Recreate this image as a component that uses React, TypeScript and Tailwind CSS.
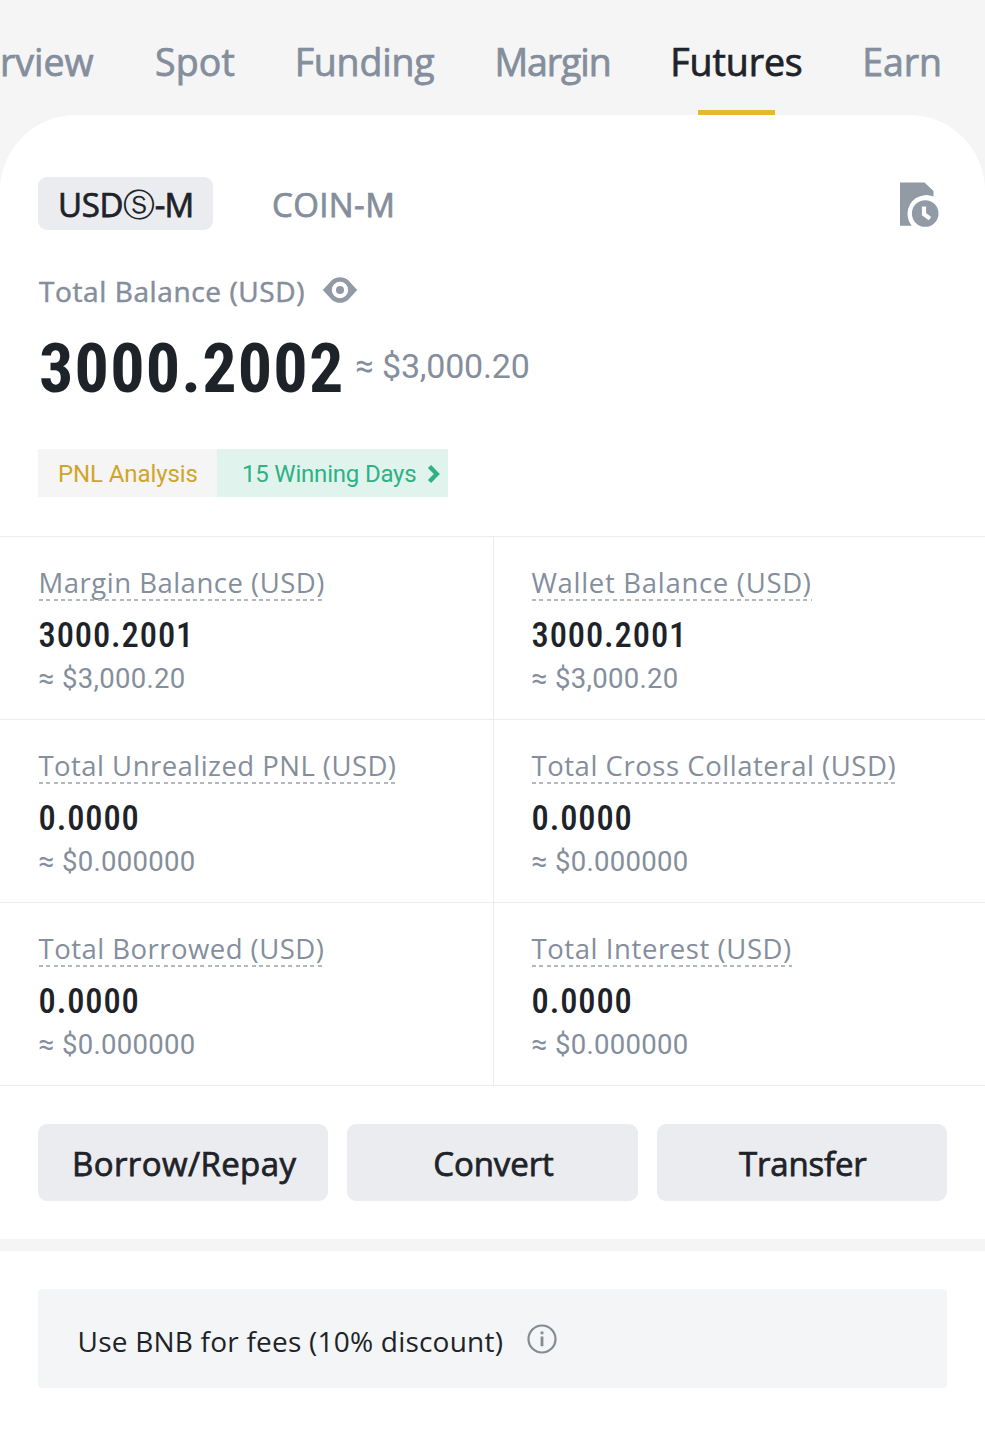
import React from "react";

const medium = "[-webkit-text-stroke:0.75px_currentColor]";
const din = "font-['Roboto','Liberation_Sans',sans-serif]";

const tabs = [
  { label: "Spot", width: "w-[80px]", tracking: "tracking-[0.2px]" },
  { label: "Funding", width: "w-[139px]", tracking: "tracking-[-0.2px]" },
  { label: "Margin", width: "w-[117px]", tracking: "tracking-[-1.1px]" },
  { label: "Futures", width: "w-[131px]", tracking: "tracking-[-0.1px]", active: true },
  { label: "Earn", width: "w-[80px]", tracking: "tracking-[-0.1px]" },
];

const stats = [
  { label: "Margin Balance (USD)", tracking: "tracking-[0.5px]", value: "3000.2001", approx: "$3,000.20" },
  { label: "Wallet Balance (USD)", tracking: "tracking-[0.7px]", value: "3000.2001", approx: "$3,000.20" },
  { label: "Total Unrealized PNL (USD)", tracking: "tracking-[0.46px]", value: "0.0000", approx: "$0.000000" },
  { label: "Total Cross Collateral (USD)", tracking: "tracking-[0.54px]", value: "0.0000", approx: "$0.000000" },
  { label: "Total Borrowed (USD)", tracking: "tracking-[0.48px]", value: "0.0000", approx: "$0.000000" },
  { label: "Total Interest (USD)", tracking: "tracking-[0.58px]", value: "0.0000", approx: "$0.000000" },
];

const HistoryIcon: React.FC = () => (
  <svg width="40" height="46" viewBox="0 0 40 46" className="text-[#929aa5]">
    <path
      fill="currentColor"
      d="M1 .5h24.5L34.5 9v5.6A18.6 18.6 0 0 0 8.5 31.5c0 5 1.6 9 4.3 12.3H1z"
    />
    <circle cx="26.2" cy="31.5" r="13.3" fill="currentColor" />
    <path d="M25 24.5v7.6l6 4.6" fill="none" stroke="#fff" strokeWidth="4.2" />
  </svg>
);

const EyeIcon: React.FC = () => (
  <svg width="36" height="28" viewBox="0 0 36 28" className="text-[#929aa5]">
    <path
      fill="currentColor"
      fillRule="evenodd"
      d="M.8 14 9.5 4.4C14.5.1 21.5.1 26.5 4.4L35.2 14l-8.7 9.4c-5 4.5-12 4.5-17 0zM18 5.8a8.2 8.2 0 1 0 0 16.4 8.2 8.2 0 0 0 0-16.4z"
    />
    <circle cx="18" cy="14" r="4" fill="currentColor" />
  </svg>
);

const InfoIcon: React.FC = () => (
  <svg width="30" height="30" viewBox="0 0 30 30" className="text-[#858a91]">
    <circle cx="15" cy="15" r="13.5" fill="none" stroke="currentColor" strokeWidth="2.2" />
    <path d="M15 12.5v9.8M15 7.6v2.7" stroke="currentColor" strokeWidth="2.8" />
  </svg>
);

const Header: React.FC = () => (
  <nav className="flex h-[115px] justify-end overflow-hidden pr-[43px]">
    <div className="flex shrink-0 gap-[60px] whitespace-nowrap pt-[38.5px] text-[37.5px] leading-[46px] text-[#848e9c]">
      <span className={`w-[164px] shrink-0 ${medium}`}>Overview</span>
      {tabs.map((tab) => (
        <div key={tab.label} className={`flex shrink-0 flex-col items-center ${tab.width}`}>
          <span className={`${tab.tracking} ${medium} ${tab.active ? "text-[#1e2329]" : ""}`}>
            {tab.label}
          </span>
          {tab.active && <div className="mt-[25.5px] h-[5px] w-[77px] bg-[#e5b929]" />}
        </div>
      ))}
    </div>
  </nav>
);

const Stat: React.FC<(typeof stats)[number]> = ({ label, tracking, value, approx }) => (
  <div className="pt-[28px]">
    <div className="flex w-fit flex-col">
      <span className={`whitespace-nowrap pt-px text-[27.5px] leading-[33px] text-[#848e9c] ${tracking}`}>
        {label}
      </span>
      <span className="h-[1.5px] bg-[repeating-linear-gradient(90deg,#b3b8bf_0_4px,transparent_4px_7.33px)]" />
    </div>
    <p className={`mt-[14px] text-[34.5px] font-medium leading-[40px] tracking-[0.9px] [font-stretch:75%] ${din}`}>
      {value}
    </p>
    <p className={`mt-[6px] flex text-[27.5px] leading-[36px] text-[#848e9c] ${din}`}>
      <span className="w-[23.500px] text-[28.500px]">≈</span>
      <span className="tracking-[0.3px]">{approx}</span>
    </p>
  </div>
);

const ActionButton: React.FC<{ label: string; tracking: string }> = ({ label, tracking }) => (
  <button
    className={`h-[76.5px] flex-1 rounded-[9px] bg-[#eaecef] pl-[2px] pt-[2px] text-[33px] leading-none ${tracking} ${medium}`}
  >
    {label}
  </button>
);

export default function App() {
  return (
    <div className="h-[1440px] w-[985px] overflow-hidden bg-[#f5f5f5] font-['Open_Sans','Liberation_Sans',sans-serif] text-[#1e2329]">
      <Header />

      <main className="h-[1325px] rounded-t-[76px] bg-white pt-[62px]">
        <div className="flex h-[53px] items-center pl-[38px] pr-[46px]">
          <div className={`flex h-[53px] w-[175px] items-center rounded-[9px] bg-[#eaecef] pl-[20px] pt-[2px] text-[33px] leading-[40px] ${medium}`}>
            <span className="tracking-[-0.3px]">USD</span>
            <span className="w-[31.500px] font-['DejaVu_Sans'] text-[32px] leading-[40px] [-webkit-text-stroke:0]">
              Ⓢ
            </span>
            <span className="tracking-[-0.9px]">-M</span>
          </div>
          <span className={`ml-[59px] mt-[2px] text-[33px] leading-[40px] tracking-[0.4px] text-[#848e9c] ${medium}`}>
            COIN-M
          </span>
          <div className="ml-auto mt-[3px]">
            <HistoryIcon />
          </div>
        </div>

        <div className="mt-[43px] flex h-[36px] items-center pl-[39px]">
          <span className="text-[28px] leading-[36px] tracking-[0.6px] text-[#848e9c] [-webkit-text-stroke:0.5px_currentColor]">
            Total Balance (USD)
          </span>
          <div className="-mt-[3px] ml-[16.500px]">
            <EyeIcon />
          </div>
        </div>

        <div className={`mt-[20px] flex h-[80px] items-center pl-[39px] ${din}`}>
          <span className="w-[316px] text-[68px] font-bold leading-[80px] tracking-[1.2px] [font-stretch:75%]">
            3000.2002
          </span>
          <span className="-mt-[6px] flex text-[34px] leading-[40px] text-[#848e9c]">
            <span className="w-[27px] text-[33px]">≈</span>
            <span className="tracking-[-0.2px]">$3,000.20</span>
          </span>
        </div>

        <div className={`ml-[38px] mt-[40px] flex h-[48px] w-[410px] text-[24px] leading-[50px] ${din}`}>
          <span className="w-[179px] bg-[#f5f5f5] pl-[20px] tracking-[-0.1px] text-[#d0a52c]">PNL Analysis</span>
          <div className="flex flex-1 items-center bg-[#e0f4ed] pl-[25px] text-[#2fb184]">
            <span className="w-[185px] whitespace-nowrap pt-[2px] leading-[48px] tracking-[-0.2px]">15 Winning Days</span>
            <svg width="14" height="20" viewBox="0 0 14 20" className="mt-[2px]">
              <path d="M2.5 2.5 9.8 10l-7.3 7.5" fill="none" stroke="currentColor" strokeWidth="4.4" />
            </svg>
          </div>
        </div>

        <div className="mt-[39px] grid h-[550px] grid-cols-[494px_1fr] grid-rows-3 border-b border-[#eaecef]">
          {stats.map((stat) => (
            <div key={stat.label} className="border-t border-[#eaecef] odd:border-r odd:pl-[38.5px] even:pl-[37.5px]">
              <Stat {...stat} />
            </div>
          ))}
        </div>

        <div className="flex gap-[19px] px-[38px] pb-[38px] pt-[38px]">
          <ActionButton label="Borrow/Repay" tracking="tracking-[0.4px]" />
          <ActionButton label="Convert" tracking="tracking-[-0.1px]" />
          <ActionButton label="Transfer" tracking="tracking-[-0.2px]" />
        </div>

        <div className="h-[12px] bg-[#f5f5f5]" />

        <div className="mx-[38px] mt-[38px] flex h-[99px] items-center rounded-[4px] bg-[#f3f5f7] pl-[39.500px]">
          <span className="mt-[5px] text-[28px] leading-[36px] tracking-[0.22px]">
            Use BNB for fees (10% discount)
          </span>
          <div className="ml-[23.500px] mt-px">
            <InfoIcon />
          </div>
        </div>
      </main>
    </div>
  );
}
